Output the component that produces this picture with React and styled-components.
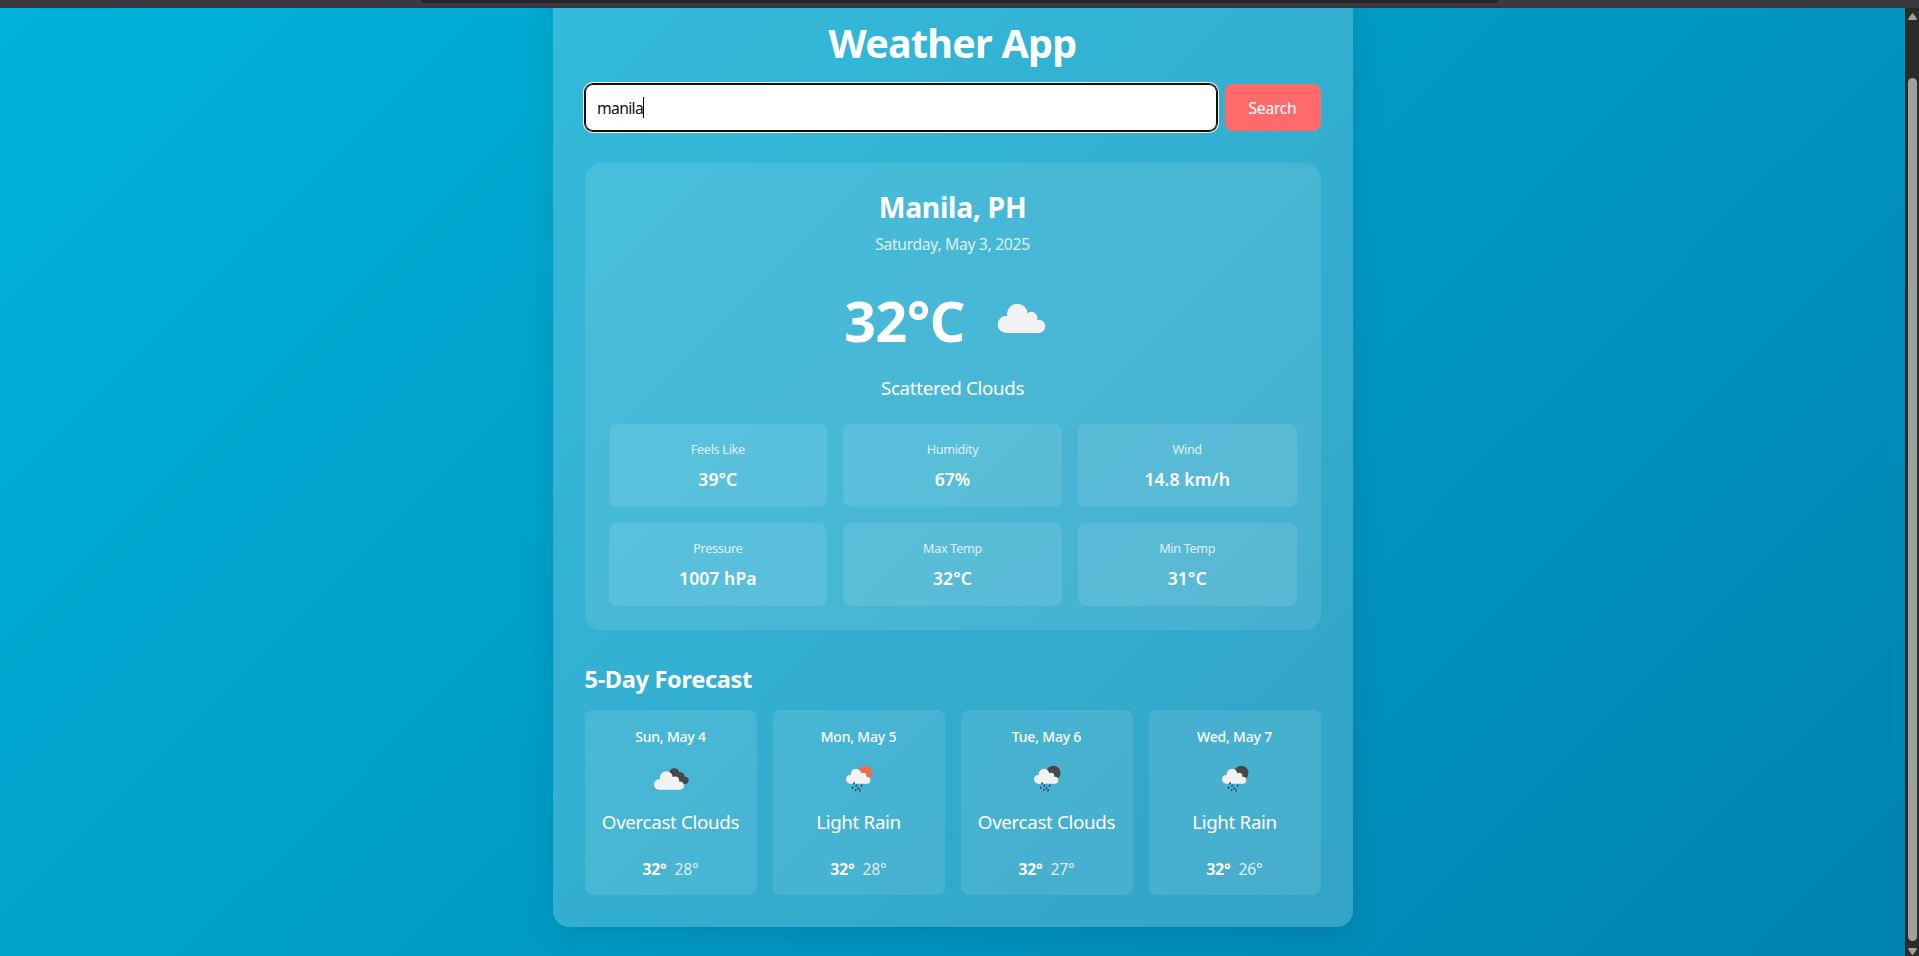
import React from "react";
import styled, { createGlobalStyle } from "styled-components";

const GlobalStyle = createGlobalStyle`
  * { box-sizing: border-box; margin: 0; padding: 0; }
  body { margin: 0; overflow: hidden; font-family: "Noto Sans", "Open Sans", sans-serif; color: #fff; }
`;

const Window = styled.div`
  display: flex;
  flex-direction: column;
  height: 956px;
  overflow: hidden;
`;
const BrowserEdge = styled.div`
  display: flex;
  justify-content: center;
  flex: 0 0 8px;
  background: #3b3b3f;
  border-bottom: 1px solid #353539;
`;
const AddressEdge = styled.div`
  width: 1077px;
  height: 3px;
  border-radius: 0 0 3px 3px;
  background: #25252a;
`;
const Viewport = styled.div`
  display: flex;
  flex: 1;
  min-height: 0;
`;
const Page = styled.main`
  flex: 1;
  display: flex;
  flex-direction: column;
  align-items: center;
  overflow: hidden;
  background: linear-gradient(135deg, #00b4db, #0083b0) 0 100% / 100% 1004px no-repeat;
`;
const Scrollbar = styled.div`
  width: 14px;
  padding: 5px 2px 0 3px;
  display: flex;
  flex-direction: column;
  align-items: center;
  background: #2b2b2b;
`;
const Thumb = styled.div`
  width: 9px;
  height: 863px;
  margin: 58px 0 7px;
  flex-shrink: 0;
  border-radius: 5px;
  background: #9f9f9f;
`;
const Arrow = styled.svg`
  width: 9px;
  height: 7px;
  flex-shrink: 0;
  fill: #9f9f9f;
`;
const Container = styled.div`
  width: 800px;
  height: 942px;
  margin-top: -23px;
  padding: 32px;
  flex-shrink: 0;
  border-radius: 16px;
  background: rgba(255, 255, 255, 0.2);
  box-shadow: 0 8px 32px rgba(0, 0, 0, 0.1);
`;
const Title = styled.h1`
  font-size: 39.5px;
  line-height: 52px;
  letter-spacing: -0.75px;
  text-align: center;
  margin-bottom: 15px;
`;
const SearchRow = styled.form`
  display: flex;
  gap: 8px;
  height: 47px;
  margin-bottom: 32px;
`;
const Field = styled.div`
  flex: 1;
  display: flex;
  align-items: center;
  padding: 0 12.5px;
  border-radius: 8px;
  background: #fff;
  color: #111;
  font-size: 15.7px;
  letter-spacing: -0.65px;
  box-shadow: inset 0 0 0 1px #101010, 0 0 0 1px #101010, 0 0 0 2px #fff;
`;
const Caret = styled.span`
  width: 1px;
  height: 21px;
  background: #000;
`;
const SearchButton = styled.button`
  width: 96px;
  border: 0;
  border-radius: 8px;
  background: #ff6b6b;
  color: #fff;
  font: 400 15.7px "Noto Sans", sans-serif;
  letter-spacing: -0.3px;
`;
const Current = styled.section`
  height: 467px;
  padding: 24px;
  border-radius: 16px;
  background: rgba(255, 255, 255, 0.1);
  text-align: center;
`;
const City = styled.h2`
  font-size: 28.4px;
  line-height: 40px;
  letter-spacing: -0.35px;
`;
const Today = styled.p`
  margin: 6px 0 26px;
  font-size: 15.7px;
  line-height: 22px;
  letter-spacing: -0.32px;
  opacity: 0.8;
`;
const Reading = styled.div`
  display: flex;
  justify-content: center;
  align-items: center;
  gap: 16px;
  height: 80px;
`;
const Temperature = styled.div`
  font-size: 55.5px;
  font-weight: 700;
  line-height: 80px;
  letter-spacing: -0.5px;
`;
const Description = styled.p`
  font-size: 18.8px;
  line-height: 24px;
  letter-spacing: -0.35px;
  white-space: nowrap;
  margin: ${(p) => p.$margin};
`;
const Details = styled.div`
  display: grid;
  grid-template-columns: repeat(3, 1fr);
  gap: 16px;
`;
const Detail = styled.div`
  height: 83px;
  padding: 16px;
  border-radius: 8px;
  background: rgba(255, 255, 255, 0.1);
`;
const Label = styled.div`
  font-size: 12.6px;
  line-height: 20px;
  letter-spacing: -0.3px;
  opacity: 0.8;
`;
const Value = styled.div`
  margin-top: 8px;
  font-size: 17.6px;
  font-weight: 600;
  line-height: 22px;
  letter-spacing: 0.05px;
`;
const ForecastTitle = styled.h3`
  margin: 33px 0 15px;
  font-size: 23.6px;
  line-height: 32px;
  letter-spacing: -0.35px;
`;
const ForecastGrid = styled.div`
  display: grid;
  grid-template-columns: repeat(4, 1fr);
  gap: 16px;
`;
const Day = styled.article`
  height: 185px;
  padding: 16px 0 13px;
  display: flex;
  flex-direction: column;
  align-items: center;
  border-radius: 8px;
  background: rgba(255, 255, 255, 0.1);
`;
const DayName = styled.div`
  font-size: 14px;
  font-weight: 500;
  line-height: 22px;
  letter-spacing: -0.2px;
  margin-bottom: 6px;
`;
const Range = styled.div`
  display: flex;
  gap: 8px;
  font-size: 15.7px;
  line-height: 24px;
  letter-spacing: -0.2px;
`;
const High = styled.span`
  font-weight: 700;
`;
const Low = styled.span`
  opacity: 0.8;
`;
const Icon = styled.svg`
  width: ${(p) => p.$size}px;
  height: ${(p) => p.$size}px;
  display: block;
`;

const Cloud = ({ transform }) => (
  <g transform={transform} fill="#f2f2f2">
    <circle cx="25.5" cy="62.5" r="25.5" />
    <circle cx="59" cy="31" r="31" />
    <circle cx="101" cy="43" r="18.5" />
    <circle cx="123" cy="68" r="20" />
    <path d="M25.5 40H100L123 60V88H25.5Z" />
  </g>
);

const drops = [[60, 88], [56, 101], [67, 95], [65, 108], [83, 95], [73, 103], [78, 109]];

function WeatherIcon({ kind }) {
  if (kind === "cloud") {
    return (
      <Icon $size={80} viewBox="0 0 240 240">
        <Cloud transform="translate(50 68)" />
      </Icon>
    );
  }
  if (kind === "overcast") {
    return (
      <Icon $size={50} viewBox="0 0 150 150">
        <g fill="#48484a">
          <circle cx="85" cy="57" r="14.5" />
          <circle cx="103" cy="67" r="12.5" />
          <circle cx="117" cy="79" r="11" />
          <path d="M80 62L100 60L117 90H95Z" />
        </g>
        <Cloud transform="translate(24 52) scale(.63)" />
      </Icon>
    );
  }
  return (
    <Icon $size={50} viewBox="0 0 150 150">
      <circle cx="94" cy="56.500" r="21.500" fill={kind === "rain-day" ? "#ec6e4c" : "#48484a"} />
      <Cloud transform="translate(36 44) scale(.51)" />
      <g stroke="#274552" strokeWidth="4.200" strokeLinecap="round">
        {drops.map(([x, y]) => (
          <path key={`${x}-${y}`} d={`M${x + 0.8} ${y - 1.5}l-1.600 3`} />
        ))}
      </g>
    </Icon>
  );
}

const details = [
  ["Feels Like", "39°C"],
  ["Humidity", "67%"],
  ["Wind", "14.8 km/h"],
  ["Pressure", "1007 hPa"],
  ["Max Temp", "32°C"],
  ["Min Temp", "31°C"],
];
const days = [
  ["Sun, May 4", "overcast", "Overcast Clouds", "32°", "28°"],
  ["Mon, May 5", "rain-day", "Light Rain", "32°", "28°"],
  ["Tue, May 6", "rain-night", "Overcast Clouds", "32°", "27°"],
  ["Wed, May 7", "rain-night", "Light Rain", "32°", "26°"],
];

export default function App() {
  return (
    <Window>
      <GlobalStyle />
      <BrowserEdge><AddressEdge /></BrowserEdge>
      <Viewport>
        <Page>
          <Container>
            <Title>Weather App</Title>
            <SearchRow>
              <Field>manila<Caret /></Field>
              <SearchButton type="button">Search</SearchButton>
            </SearchRow>
            <Current>
              <City>Manila, PH</City>
              <Today>Saturday, May 3, 2025</Today>
              <Reading>
                <Temperature>32°C</Temperature>
                <WeatherIcon kind="cloud" />
              </Reading>
              <Description $margin="15px 0 24px">Scattered Clouds</Description>
              <Details>
                {details.map(([label, value]) => (
                  <Detail key={label}>
                    <Label>{label}</Label>
                    <Value>{value}</Value>
                  </Detail>
                ))}
              </Details>
            </Current>
            <ForecastTitle>5-Day Forecast</ForecastTitle>
            <ForecastGrid>
              {days.map(([name, icon, text, high, low]) => (
                <Day key={name}>
                  <DayName>{name}</DayName>
                  <WeatherIcon kind={icon} />
                  <Description $margin="6px 0 23px">{text}</Description>
                  <Range><High>{high}</High><Low>{low}</Low></Range>
                </Day>
              ))}
            </ForecastGrid>
          </Container>
        </Page>
        <Scrollbar>
          <Arrow viewBox="0 0 9 7"><path d="M4.500 0Q5 0 8.700 5.500Q9 7 8 7H1Q0 7 .3 5.500Q4 0 4.500 0Z" /></Arrow>
          <Thumb />
          <Arrow viewBox="0 0 9 7"><path d="M4.500 7Q5 7 8.700 1.500Q9 0 8 0H1Q0 0 .3 1.500Q4 7 4.500 7Z" /></Arrow>
        </Scrollbar>
      </Viewport>
    </Window>
  );
}
